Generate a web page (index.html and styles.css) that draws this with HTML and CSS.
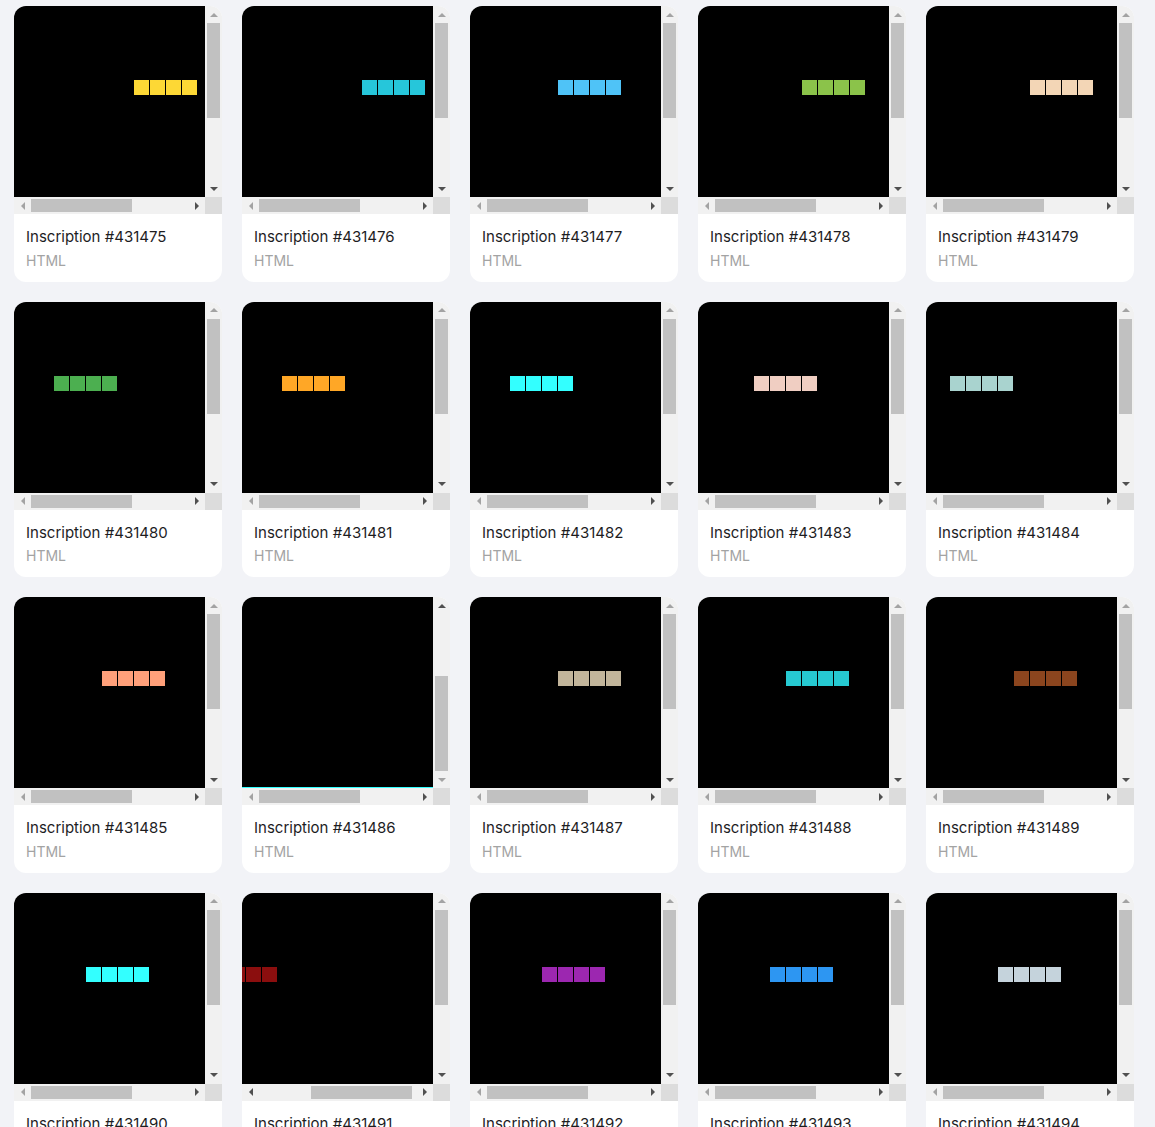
FILE: index.html
```html
<!DOCTYPE html>
<html lang="en">
<head>
<meta charset="utf-8">
<title>Inscriptions</title>
<link rel="stylesheet" href="styles.css">
</head>
<body>
<main class="grid">

  <div class="card">
    <div class="frame">
      <div class="view"><div class="blocks" style="--x:120px;--c:#fdd835"><i></i><i></i><i></i><i></i></div></div>
      <div class="vbar"><span class="btn"><b class="up off"></b></span><span class="track"><span class="thumb"></span></span><span class="btn"><b class="down"></b></span></div>
      <div class="hbar"><span class="btn"><b class="left off"></b></span><span class="track"><span class="thumb"></span></span><span class="btn"><b class="right"></b></span></div>
      <div class="corner"></div>
    </div>
    <div class="info"><div class="title">Inscription #431475</div><div class="type">HTML</div></div>
  </div>

  <div class="card">
    <div class="frame">
      <div class="view"><div class="blocks" style="--x:120px;--c:#26c6da"><i></i><i></i><i></i><i></i></div></div>
      <div class="vbar"><span class="btn"><b class="up off"></b></span><span class="track"><span class="thumb"></span></span><span class="btn"><b class="down"></b></span></div>
      <div class="hbar"><span class="btn"><b class="left off"></b></span><span class="track"><span class="thumb"></span></span><span class="btn"><b class="right"></b></span></div>
      <div class="corner"></div>
    </div>
    <div class="info"><div class="title">Inscription #431476</div><div class="type">HTML</div></div>
  </div>

  <div class="card">
    <div class="frame">
      <div class="view"><div class="blocks" style="--x:88px;--c:#4fc3f7"><i></i><i></i><i></i><i></i></div></div>
      <div class="vbar"><span class="btn"><b class="up off"></b></span><span class="track"><span class="thumb"></span></span><span class="btn"><b class="down"></b></span></div>
      <div class="hbar"><span class="btn"><b class="left off"></b></span><span class="track"><span class="thumb"></span></span><span class="btn"><b class="right"></b></span></div>
      <div class="corner"></div>
    </div>
    <div class="info"><div class="title">Inscription #431477</div><div class="type">HTML</div></div>
  </div>

  <div class="card">
    <div class="frame">
      <div class="view"><div class="blocks" style="--x:104px;--c:#8bc34a"><i></i><i></i><i></i><i></i></div></div>
      <div class="vbar"><span class="btn"><b class="up off"></b></span><span class="track"><span class="thumb"></span></span><span class="btn"><b class="down"></b></span></div>
      <div class="hbar"><span class="btn"><b class="left off"></b></span><span class="track"><span class="thumb"></span></span><span class="btn"><b class="right"></b></span></div>
      <div class="corner"></div>
    </div>
    <div class="info"><div class="title">Inscription #431478</div><div class="type">HTML</div></div>
  </div>

  <div class="card">
    <div class="frame">
      <div class="view"><div class="blocks" style="--x:104px;--c:#f3d6b6"><i></i><i></i><i></i><i></i></div></div>
      <div class="vbar"><span class="btn"><b class="up off"></b></span><span class="track"><span class="thumb"></span></span><span class="btn"><b class="down"></b></span></div>
      <div class="hbar"><span class="btn"><b class="left off"></b></span><span class="track"><span class="thumb"></span></span><span class="btn"><b class="right"></b></span></div>
      <div class="corner"></div>
    </div>
    <div class="info"><div class="title">Inscription #431479</div><div class="type">HTML</div></div>
  </div>

  <div class="card">
    <div class="frame">
      <div class="view"><div class="blocks" style="--x:40px;--c:#4caf50"><i></i><i></i><i></i><i></i></div></div>
      <div class="vbar"><span class="btn"><b class="up off"></b></span><span class="track"><span class="thumb"></span></span><span class="btn"><b class="down"></b></span></div>
      <div class="hbar"><span class="btn"><b class="left off"></b></span><span class="track"><span class="thumb"></span></span><span class="btn"><b class="right"></b></span></div>
      <div class="corner"></div>
    </div>
    <div class="info"><div class="title">Inscription #431480</div><div class="type">HTML</div></div>
  </div>

  <div class="card">
    <div class="frame">
      <div class="view"><div class="blocks" style="--x:40px;--c:#ffa726"><i></i><i></i><i></i><i></i></div></div>
      <div class="vbar"><span class="btn"><b class="up off"></b></span><span class="track"><span class="thumb"></span></span><span class="btn"><b class="down"></b></span></div>
      <div class="hbar"><span class="btn"><b class="left off"></b></span><span class="track"><span class="thumb"></span></span><span class="btn"><b class="right"></b></span></div>
      <div class="corner"></div>
    </div>
    <div class="info"><div class="title">Inscription #431481</div><div class="type">HTML</div></div>
  </div>

  <div class="card">
    <div class="frame">
      <div class="view"><div class="blocks" style="--x:40px;--c:#33ffff"><i></i><i></i><i></i><i></i></div></div>
      <div class="vbar"><span class="btn"><b class="up off"></b></span><span class="track"><span class="thumb"></span></span><span class="btn"><b class="down"></b></span></div>
      <div class="hbar"><span class="btn"><b class="left off"></b></span><span class="track"><span class="thumb"></span></span><span class="btn"><b class="right"></b></span></div>
      <div class="corner"></div>
    </div>
    <div class="info"><div class="title">Inscription #431482</div><div class="type">HTML</div></div>
  </div>

  <div class="card">
    <div class="frame">
      <div class="view"><div class="blocks" style="--x:56px;--c:#f0cec2"><i></i><i></i><i></i><i></i></div></div>
      <div class="vbar"><span class="btn"><b class="up off"></b></span><span class="track"><span class="thumb"></span></span><span class="btn"><b class="down"></b></span></div>
      <div class="hbar"><span class="btn"><b class="left off"></b></span><span class="track"><span class="thumb"></span></span><span class="btn"><b class="right"></b></span></div>
      <div class="corner"></div>
    </div>
    <div class="info"><div class="title">Inscription #431483</div><div class="type">HTML</div></div>
  </div>

  <div class="card">
    <div class="frame">
      <div class="view"><div class="blocks" style="--x:24px;--c:#a9d3cf"><i></i><i></i><i></i><i></i></div></div>
      <div class="vbar"><span class="btn"><b class="up off"></b></span><span class="track"><span class="thumb"></span></span><span class="btn"><b class="down"></b></span></div>
      <div class="hbar"><span class="btn"><b class="left off"></b></span><span class="track"><span class="thumb"></span></span><span class="btn"><b class="right"></b></span></div>
      <div class="corner"></div>
    </div>
    <div class="info"><div class="title">Inscription #431484</div><div class="type">HTML</div></div>
  </div>

  <div class="card">
    <div class="frame">
      <div class="view"><div class="blocks" style="--x:88px;--c:#ffa07a"><i></i><i></i><i></i><i></i></div></div>
      <div class="vbar"><span class="btn"><b class="up off"></b></span><span class="track"><span class="thumb"></span></span><span class="btn"><b class="down"></b></span></div>
      <div class="hbar"><span class="btn"><b class="left off"></b></span><span class="track"><span class="thumb"></span></span><span class="btn"><b class="right"></b></span></div>
      <div class="corner"></div>
    </div>
    <div class="info"><div class="title">Inscription #431485</div><div class="type">HTML</div></div>
  </div>

  <div class="card">
    <div class="frame">
      <div class="view edge"></div>
      <div class="vbar"><span class="btn"><b class="up"></b></span><span class="track"><span class="thumb" style="--o:62px"></span></span><span class="btn"><b class="down off"></b></span></div>
      <div class="hbar"><span class="btn"><b class="left off"></b></span><span class="track"><span class="thumb"></span></span><span class="btn"><b class="right"></b></span></div>
      <div class="corner"></div>
    </div>
    <div class="info"><div class="title">Inscription #431486</div><div class="type">HTML</div></div>
  </div>

  <div class="card">
    <div class="frame">
      <div class="view"><div class="blocks" style="--x:88px;--c:#c2b59b"><i></i><i></i><i></i><i></i></div></div>
      <div class="vbar"><span class="btn"><b class="up off"></b></span><span class="track"><span class="thumb"></span></span><span class="btn"><b class="down"></b></span></div>
      <div class="hbar"><span class="btn"><b class="left off"></b></span><span class="track"><span class="thumb"></span></span><span class="btn"><b class="right"></b></span></div>
      <div class="corner"></div>
    </div>
    <div class="info"><div class="title">Inscription #431487</div><div class="type">HTML</div></div>
  </div>

  <div class="card">
    <div class="frame">
      <div class="view"><div class="blocks" style="--x:88px;--c:#26cad2"><i></i><i></i><i></i><i></i></div></div>
      <div class="vbar"><span class="btn"><b class="up off"></b></span><span class="track"><span class="thumb"></span></span><span class="btn"><b class="down"></b></span></div>
      <div class="hbar"><span class="btn"><b class="left off"></b></span><span class="track"><span class="thumb"></span></span><span class="btn"><b class="right"></b></span></div>
      <div class="corner"></div>
    </div>
    <div class="info"><div class="title">Inscription #431488</div><div class="type">HTML</div></div>
  </div>

  <div class="card">
    <div class="frame">
      <div class="view"><div class="blocks" style="--x:88px;--c:#8b451e"><i></i><i></i><i></i><i></i></div></div>
      <div class="vbar"><span class="btn"><b class="up off"></b></span><span class="track"><span class="thumb"></span></span><span class="btn"><b class="down"></b></span></div>
      <div class="hbar"><span class="btn"><b class="left off"></b></span><span class="track"><span class="thumb"></span></span><span class="btn"><b class="right"></b></span></div>
      <div class="corner"></div>
    </div>
    <div class="info"><div class="title">Inscription #431489</div><div class="type">HTML</div></div>
  </div>

  <div class="card">
    <div class="frame">
      <div class="view"><div class="blocks" style="--x:72px;--c:#33ffff"><i></i><i></i><i></i><i></i></div></div>
      <div class="vbar"><span class="btn"><b class="up off"></b></span><span class="track"><span class="thumb"></span></span><span class="btn"><b class="down"></b></span></div>
      <div class="hbar"><span class="btn"><b class="left off"></b></span><span class="track"><span class="thumb"></span></span><span class="btn"><b class="right"></b></span></div>
      <div class="corner"></div>
    </div>
    <div class="info"><div class="title">Inscription #431490</div><div class="type">HTML</div></div>
  </div>

  <div class="card">
    <div class="frame">
      <div class="view"><div class="blocks" style="--x:-28px;--c:#8b0e0e"><i></i><i></i><i></i><i></i></div></div>
      <div class="vbar"><span class="btn"><b class="up off"></b></span><span class="track"><span class="thumb"></span></span><span class="btn"><b class="down"></b></span></div>
      <div class="hbar"><span class="btn"><b class="left"></b></span><span class="track"><span class="thumb" style="--o:52px"></span></span><span class="btn"><b class="right"></b></span></div>
      <div class="corner"></div>
    </div>
    <div class="info"><div class="title">Inscription #431491</div><div class="type">HTML</div></div>
  </div>

  <div class="card">
    <div class="frame">
      <div class="view"><div class="blocks" style="--x:72px;--c:#9c27b0"><i></i><i></i><i></i><i></i></div></div>
      <div class="vbar"><span class="btn"><b class="up off"></b></span><span class="track"><span class="thumb"></span></span><span class="btn"><b class="down"></b></span></div>
      <div class="hbar"><span class="btn"><b class="left off"></b></span><span class="track"><span class="thumb"></span></span><span class="btn"><b class="right"></b></span></div>
      <div class="corner"></div>
    </div>
    <div class="info"><div class="title">Inscription #431492</div><div class="type">HTML</div></div>
  </div>

  <div class="card">
    <div class="frame">
      <div class="view"><div class="blocks" style="--x:72px;--c:#2d96f2"><i></i><i></i><i></i><i></i></div></div>
      <div class="vbar"><span class="btn"><b class="up off"></b></span><span class="track"><span class="thumb"></span></span><span class="btn"><b class="down"></b></span></div>
      <div class="hbar"><span class="btn"><b class="left off"></b></span><span class="track"><span class="thumb"></span></span><span class="btn"><b class="right"></b></span></div>
      <div class="corner"></div>
    </div>
    <div class="info"><div class="title">Inscription #431493</div><div class="type">HTML</div></div>
  </div>

  <div class="card">
    <div class="frame">
      <div class="view"><div class="blocks" style="--x:72px;--c:#c5d3dc"><i></i><i></i><i></i><i></i></div></div>
      <div class="vbar"><span class="btn"><b class="up off"></b></span><span class="track"><span class="thumb"></span></span><span class="btn"><b class="down"></b></span></div>
      <div class="hbar"><span class="btn"><b class="left off"></b></span><span class="track"><span class="thumb"></span></span><span class="btn"><b class="right"></b></span></div>
      <div class="corner"></div>
    </div>
    <div class="info"><div class="title">Inscription #431494</div><div class="type">HTML</div></div>
  </div>

</main>
</body>
</html>
```

FILE: styles.css
```css
html {
  overflow: hidden;
}
body {
  margin: 0;
  padding: 6px 14px;
  background: #f2f3f7;
  font-family: Inter, "Noto Sans", "Liberation Sans", sans-serif;
}
.grid {
  display: grid;
  grid-template-columns: repeat(5, 208px);
  column-gap: 20px;
  row-gap: 20px;
}
.card {
  background: #ffffff;
  border-radius: 12px;
  overflow: hidden;
}
.frame {
  display: grid;
  grid-template-columns: 191px 17px;
  grid-template-rows: 191px 17px;
}
.view {
  background: #000;
  overflow: hidden;
  padding-top: 74px;
  box-sizing: border-box;
}
.view.edge {
  border-bottom: 1px solid #33ffff;
}
.blocks {
  display: flex;
  gap: 1px;
  margin-left: var(--x);
}
.blocks i {
  flex: none;
  width: 15px;
  height: 15px;
  background: var(--c);
}
.vbar, .hbar {
  background: #f1f1f1;
  display: grid;
}
.vbar {
  grid-template-rows: 17px 1fr 17px;
}
.hbar {
  grid-template-columns: 17px 1fr 17px;
}
.btn {
  display: flex;
  align-items: center;
  justify-content: center;
}
.track {
  display: flex;
}
.vbar .track {
  flex-direction: column;
  padding: 0 2px;
}
.hbar .track {
  padding: 2px 0;
}
.thumb {
  background: #c1c1c1;
  flex: none;
}
.vbar .thumb {
  height: 95px;
  margin-top: var(--o, 0px);
}
.hbar .thumb {
  width: 101px;
  margin-left: var(--o, 0px);
}
.corner {
  background: #dcdcdc;
}
.btn b {
  width: 0;
  height: 0;
  border-style: solid;
  border-color: transparent;
  --a: #505050;
}
.btn b.off {
  --a: #a3a3a3;
}
.btn b.up {
  border-width: 0 4px 4px 4px;
  border-bottom-color: var(--a);
}
.btn b.down {
  border-width: 4px 4px 0 4px;
  border-top-color: var(--a);
}
.btn b.left {
  border-width: 4px 4px 4px 0;
  border-right-color: var(--a);
}
.btn b.right {
  border-width: 4px 0 4px 4px;
  border-left-color: var(--a);
}
.info {
  padding: 12px 12px 11px;
}
.title {
  font-size: 15px;
  line-height: 1.5;
  color: #1d1d1f;
}
.type {
  padding-top: 1px;
  font-size: 14px;
  line-height: 1.5;
  color: #a3a3a3;
}
```
